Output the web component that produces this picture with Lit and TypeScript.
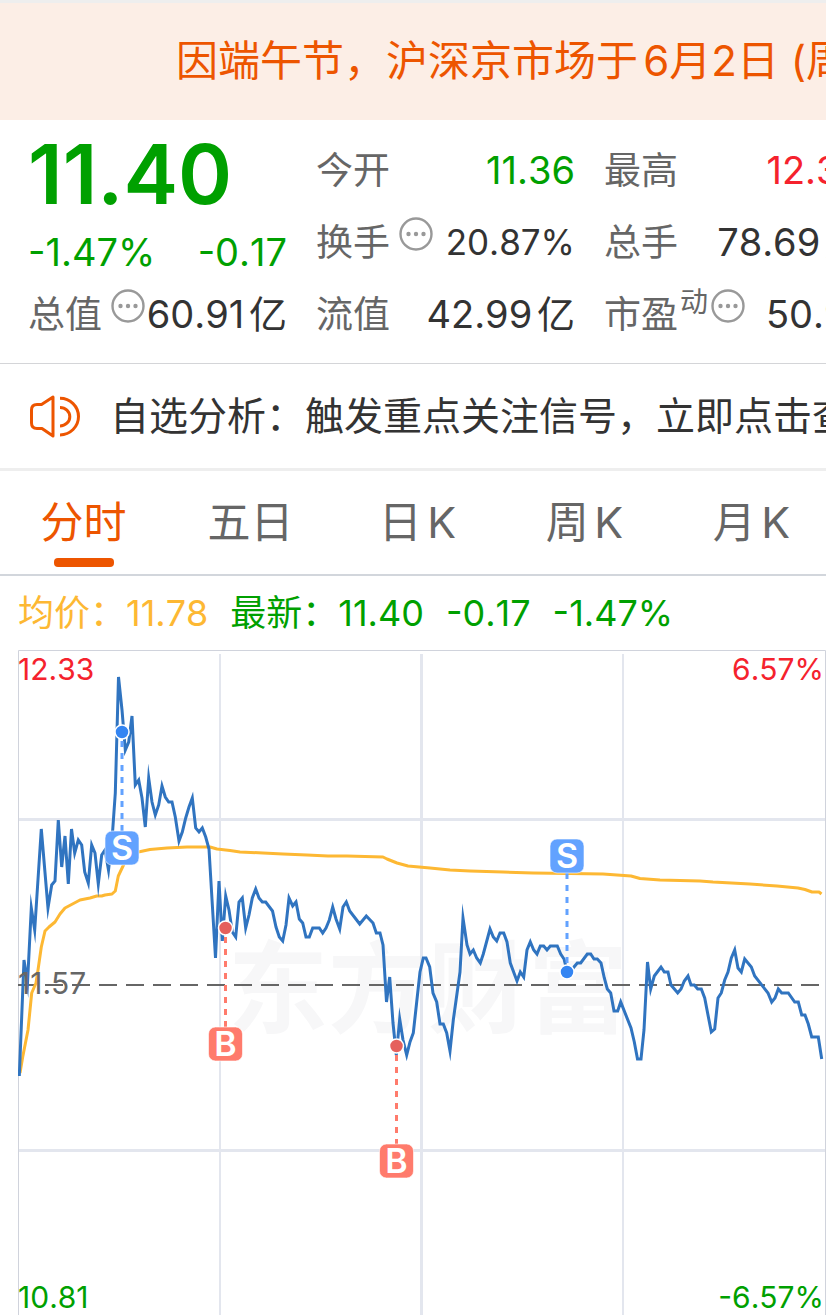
import { LitElement, html, svg, css, nothing } from "lit";
import { customElement, state } from "lit/decorators.js";

type Tone = "up" | "down" | "plain";

interface Stat {
  label: string;
  value: string;
  tone: Tone;
  sup?: string;
  info?: boolean;
  compact?: boolean;
}

interface Trade {
  kind: "S" | "B";
  x: number;
  dotY: number;
  badgeY: number;
}

const STATS: Stat[] = [
  { label: "今开", value: "11.36", tone: "down" },
  { label: "最高", value: "12.33", tone: "up" },
  { label: "换手", value: "20.87%", tone: "plain", info: true, compact: true },
  { label: "总手", value: "78.69万", tone: "plain" },
  { label: "总值", value: "60.91亿", tone: "plain", info: true },
  { label: "流值", value: "42.99亿", tone: "plain" },
  { label: "市盈", value: "50.91", tone: "plain", sup: "动", info: true },
];

const TABS = ["分时", "五日", "日K", "周K", "月K"];

const PRICE_LINE =
  "19.3,1076 24,960 27.5,983 31.3,908 34.7,930 41.3,829 48,908 51.7,885 55,881 58.3,820 61.7,867 65,836 68.3,884 71.5,829 74.7,853 78.3,840 81.7,845 84.7,872 88.3,883 91.7,845 95,853 98.3,884 101.7,855 105,850 108.5,870 112,840 115.3,793 118.5,677 122,710 125.3,750 128.7,742 132,716 135.3,785 138.7,780 142,798 145.3,827 148.7,778 152,802 155.3,815 158.7,805 162,786 165.3,797 168.7,802 172,802 175.3,817 179,841 182.3,832 185.7,818 189,807 192.3,798 195.7,828 199,832 202.3,828 205.7,837 209,849 215.5,958 219,881 222.3,941 225.7,896 229,910 232.3,932 235.7,937 239,902 242.3,898 245.7,928 249,915 252.3,898 255.7,889 259,898 262.3,902 265.7,902 272.5,911 276,927 279.3,937 282.7,941 286,925 289,898 292.7,906 296,902 299.3,919 302.7,923 306,937 309.3,937 312.7,928 319.3,928 322.7,933 326,928 329.3,920 332.7,907 336,919 339.7,929 343,907 346.3,902 349.7,911 359.7,924 366.3,916 373,923 376.3,933 380,933 383,945 386.5,1002 389.7,977 393,1023 396.3,1055 399.7,1019 403,1040 406.7,1055 410,1042 413.3,1033 416.7,1002 420,972 423.3,958 426,958 429.7,967 433,993 436.7,1002 440,1024 443.3,1024 446.7,1033 450,1051 453.3,1020 460,972 463,918 467,945 470,954 473.3,950 476.7,958 480.3,963 483.3,954 490,929 493.3,937 496.7,941 500,933 503.7,933 507,942 510.3,963 517,981 520.3,972 523.7,977 527,950 530.3,942 533.7,950 537,954 540.3,946 543.7,946 547,950 550.3,946 557.3,946 560.7,954 564,959 567.3,972 570.7,972 574,967 577.3,963 580.7,963 587.3,954 590.7,954 594,959 597.3,959 601,963 604.3,978 607.3,989 610.7,993 614,1011 617.7,1011 620.7,1002 631,1028 634.3,1042 637.5,1059 641,1059 644,1030 647.5,962 650.7,989 654.3,976 661,967 664.3,972 668,972 671,985 677.7,993 681,989 684.3,981 688,976 691,985 694.3,985 697.7,989 701.3,989 704.7,998 711.3,1032 714.7,1029 718,998 721.3,993 724.7,980 728,972 731.3,958 734.7,950 738,968 741.3,972 744.7,959 751.3,967 754.7,976 768,993 771.7,1002 775,998 778.3,989 781.7,993 788.3,993 794.7,1002 798.3,1002 801.7,1015 805,1015 808.3,1024 811.7,1037 818.3,1037 821.7,1059";

const AVERAGE_LINE =
  "20,1073 22.7,1057 28,1030 31.7,993 36,983 38,970 41.3,947 45,931 49,927 55,922 60,914 65,908 80,900 90,898 96.7,896 101.7,896 105,895 112,894 115.3,891 118.3,876 124,864 131.7,857 138.3,852 150,849.5 167,848 187,847 210,847 217,849 230,850.5 240,852 263,853 283,854 307,855 328,856 347,856 383,857 387,859 397,863 408,866 430,868 450,870 470,871 503,872 533,873 570,873.5 603,874 631,876 640,878.5 660,880 700,881 713,882 750,884 777,886 798,888 805,889.5 812,892 819,892 821.5,894";

const TRADES: Trade[] = [
  { kind: "S", x: 122, dotY: 732, badgeY: 848 },
  { kind: "B", x: 225.5, dotY: 928, badgeY: 1044 },
  { kind: "B", x: 396.5, dotY: 1046, badgeY: 1161 },
  { kind: "S", x: 567, dotY: 972, badgeY: 856 },
];

@customElement("intraday-chart")
export class IntradayChart extends LitElement {
  static styles = css`
    :host {
      display: block;
    }
    .chart {
      display: block;
      width: 100%;
      height: auto;
      font-family: Inter, "Noto Sans CJK SC", sans-serif;
      font-size: 30px;
    }
    .watermark {
      font-family: "Noto Sans CJK SC", sans-serif;
      font-weight: 700;
      font-size: 100px;
      fill: #f7f7f8;
    }
    .frame {
      fill: none;
      stroke: #d0d3dc;
    }
    .grid {
      fill: none;
      stroke: #e3e6ee;
    }
    .base {
      stroke: #666;
      stroke-width: 2;
      stroke-dasharray: 18 9;
    }
    .price {
      fill: none;
      stroke: #3074c0;
      stroke-width: 3;
      stroke-miterlimit: 10;
    }
    .average {
      fill: none;
      stroke: #fdb833;
      stroke-width: 3;
      stroke-linejoin: round;
    }
    .up {
      fill: #f5222d;
    }
    .down {
      fill: #00a000;
    }
    .mid {
      fill: #666;
    }
    .end {
      text-anchor: end;
    }
    .stem {
      stroke-width: 3;
      stroke-dasharray: 6 6;
    }
    .badge {
      stroke: #fff;
      stroke-opacity: 0.6;
      stroke-width: 1;
    }
    .dot {
      stroke: #fff;
      stroke-width: 1.5;
    }
    .sell .stem {
      stroke: #62a2ff;
    }
    .sell .badge {
      fill: #62a2ff;
    }
    .sell .dot {
      fill: #3485f2;
    }
    .buy .stem {
      stroke: #ff7b6c;
    }
    .buy .badge {
      fill: #ff7b6c;
    }
    .buy .dot {
      fill: #e5605c;
    }
    .letter {
      fill: #fff;
      font-size: 34px;
      font-weight: 600;
      text-anchor: middle;
    }
  `;

  private trade(t: Trade) {
    const dir = t.badgeY > t.dotY ? 1 : -1;
    return svg`
      <g class=${t.kind === "S" ? "sell" : "buy"}>
        <line class="stem" x1=${t.x} x2=${t.x} y1=${t.dotY + 9 * dir} y2=${t.badgeY - 17 * dir}></line>
        <circle class="dot" cx=${t.x} cy=${t.dotY} r="7"></circle>
        <rect class="badge" x=${t.x - 17} y=${t.badgeY - 17} width="34" height="34" rx="7"></rect>
        <text class="letter" x=${t.x} y=${t.badgeY + 12}>${t.kind}</text>
      </g>`;
  }

  render() {
    return html`
      <svg class="chart" viewBox="18 650 808 665" role="img" aria-label="分时走势">
        <text class="watermark" x="228" y="1025">东方财富</text>
        <g class="grid">
          <path stroke-width="2" d="M220 654V1315M623 654V1315"></path>
          <path stroke-width="3" d="M421.5 654V1315M19 819.5H825M19 1150.5H825"></path>
        </g>
        <path class="frame" d="M18.5 1315V650.5H825.5V1315"></path>
        <line class="base" x1="18" x2="822" y1="985" y2="985"></line>
        <polyline class="average" points=${AVERAGE_LINE}></polyline>
        <polyline class="price" points=${PRICE_LINE}></polyline>
        <text class="up" x="18" y="680">12.33</text>
        <text class="up end" x="824" y="680">6.57%</text>
        <text class="mid" x="18" y="994">11.57</text>
        <text class="down" x="18" y="1308">10.81</text>
        <text class="down end" x="824" y="1308">-6.57%</text>
        ${TRADES.map((t) => this.trade(t))}
      </svg>
    `;
  }
}

@customElement("app-root")
export class AppRoot extends LitElement {
  @state() private active = 0;

  static styles = css`
    :host {
      display: block;
      overflow: hidden;
      background: #fff;
      color: #333;
      font-family: Inter, "Noto Sans CJK SC", sans-serif;
      font-size: 38px;
      font-kerning: none;
      line-height: 72px;
      white-space: nowrap;
      text-autospace: normal;
    }
    button {
      margin: 0;
      padding: 0;
      border: 0;
      background: none;
      color: inherit;
      font: inherit;
      font-kerning: none;
      cursor: pointer;
    }
    .notice {
      padding: 22px 0 23px 176px;
      border-top: 3px solid #eee;
      background: #fceee6;
      color: #ed5500;
      font-size: 42px;
    }
    .tight {
      text-autospace: no-autospace;
    }
    .quote {
      display: grid;
      grid-template-columns: repeat(3, minmax(259px, 1fr));
      grid-auto-rows: 72px;
      column-gap: 29px;
      padding: 14px 28px 13px;
      border-bottom: 1px solid #d4d5d8;
    }
    .headline {
      grid-row: span 2;
      display: flex;
      flex-direction: column;
      color: #00a000;
    }
    .last {
      font-size: 82px;
      font-weight: 600;
      font-kerning: normal;
      line-height: 82px;
    }
    .change {
      display: flex;
      justify-content: space-between;
    }
    .stat {
      display: flex;
      align-items: center;
    }
    .label {
      padding-top: 2px;
      color: #666;
      font-size: 37px;
    }
    .sup {
      align-self: flex-start;
      margin-left: 2px;
      color: #666;
      font-size: 28px;
      line-height: 48px;
    }
    .info {
      display: flex;
      align-self: flex-start;
      padding-top: 10px;
      margin-left: 8px;
    }
    .sup + .info {
      margin-left: 2px;
    }
    .info svg {
      width: 36px;
      height: 36px;
    }
    .value {
      margin-left: auto;
    }
    .compact {
      font-size: 35px;
    }
    .up {
      color: #f5222d;
    }
    .down {
      color: #00a000;
    }
    .analysis {
      display: flex;
      align-items: center;
      gap: 28px;
      padding: 16px 28px;
      border-bottom: 3px solid #eee;
      color: #333;
      font-size: 39px;
      text-decoration: none;
    }
    .speaker {
      flex: none;
      width: 54px;
      height: 46px;
    }
    .tabs {
      display: flex;
      height: 103px;
      border-bottom: 2px solid #d2d6dc;
    }
    .tab {
      flex: 1 0 167px;
      display: flex;
      flex-direction: column;
      align-items: center;
      padding-top: 15px;
      color: #666;
      font-size: 43px;
    }
    .tab.active {
      color: #ed5500;
    }
    .tab.active::after {
      content: "";
      width: 60px;
      height: 9px;
      border-radius: 4px;
      background: #ed5500;
    }
    .legend {
      display: flex;
      gap: 22px;
      padding: 1px 18px;
      color: #00a000;
      font-size: 36px;
    }
    .avg {
      color: #fdb833;
    }
    .chart {
      margin-left: 18px;
    }
  `;

  private stat(s: Stat) {
    return html`
      <div class="stat">
        <span class="label">${s.label}</span>
        ${s.sup ? html`<span class="sup">${s.sup}</span>` : nothing}
        ${s.info
          ? html`<button class="info" aria-label="${s.label}说明">
              <svg viewBox="0 0 36 36" aria-hidden="true">
                <circle cx="18" cy="18" r="15.5" fill="none" stroke="#999" stroke-width="2.4"></circle>
                <g fill="#999">
                  <circle cx="10.5" cy="18" r="2.2"></circle>
                  <circle cx="18" cy="18" r="2.2"></circle>
                  <circle cx="25.5" cy="18" r="2.2"></circle>
                </g>
              </svg>
            </button>`
          : nothing}
        <span class="value ${s.tone} ${s.compact ? "compact" : ""}">${s.value}</span>
      </div>
    `;
  }

  render() {
    return html`
      <div class="notice">因端午节，沪深京市场于6<span class="tight">月2</span>日 (周五)</div>
      <section class="quote">
        <div class="headline">
          <span class="last">11.40</span>
          <div class="change"><span>-1.47%</span><span>-0.17</span></div>
        </div>
        ${STATS.map((s) => this.stat(s))}
      </section>
      <a class="analysis" href="#analysis">
        <svg class="speaker" viewBox="28 392 54 46" fill="none" stroke="#ed5500" stroke-width="3" aria-hidden="true">
          <path
            stroke-linejoin="round"
            d="M53 396V435L42 427.5H37Q31.5 427.5 31.5 422V409Q31.5 403.5 37 403.5H41.5Z"
          ></path>
          <path d="M60 397.3A18.5 18.3 0 0 1 60 433.9M60 406.5A9.8 9.2 0 0 1 60 424.9"></path>
        </svg>
        <span>自选分析：触发重点关注信号，立即点击查看</span>
      </a>
      <nav class="tabs">
        ${TABS.map(
          (t, i) => html`<button
            class="tab ${i === this.active ? "active" : ""}"
            aria-pressed=${i === this.active}
            @click=${() => (this.active = i)}
          >
            <span>${t}</span>
          </button>`,
        )}
      </nav>
      <div class="legend">
        <span class="avg">均价：11.78</span>
        <span>最新：11.40</span>
        <span>-0.17</span>
        <span>-1.47%</span>
      </div>
      <intraday-chart class="chart"></intraday-chart>
    `;
  }
}
